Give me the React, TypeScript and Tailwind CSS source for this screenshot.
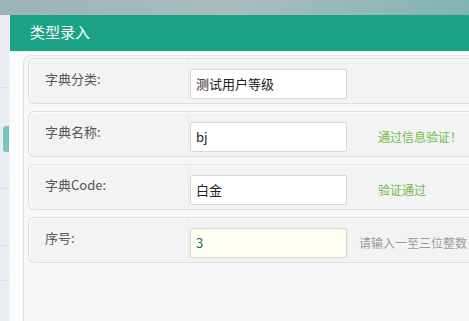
const rows = [
  { label: '字典分类:', value: '测试用户等级', msg: '', msgClass: '', focus: false },
  { label: '字典名称:', value: 'bj', msg: '通过信息验证！', msgClass: 'ml-[31px] text-[#72b84a]', focus: false },
  { label: '字典Code:', value: '白金', msg: '验证通过', msgClass: 'ml-[31px] text-[#72b84a]', focus: false },
  { label: '序号:', value: '3', msg: '请输入一至三位整数', msgClass: 'ml-[12px] text-[#9a9a9a]', focus: true },
];

const FieldRow = ({ label, value, msg, msgClass, focus }: (typeof rows)[number]) => (
  <div className="flex h-[46px] w-[460px] shrink-0 rounded-l-[6px] border border-r-0 border-[#dedede] bg-[#f3f3f3] shadow-[inset_1px_1px_0_#fbfbfb]">
    <div className="w-[160px] shrink-0 border-r border-[#ebebeb] pl-[16px] pt-[11px] text-[13px] leading-[18px] text-[#555]">
      {label}
    </div>
    <div className="flex h-[30px] items-center self-start mt-[10px] ml-[1px]">
      <div
        className={
          focus
            ? 'flex h-[30px] w-[157px] items-center rounded-[3px] border border-[#ddd6c8] bg-[#fffff2] pl-[5px] text-[13px] text-[#1f6f66] shadow-[0_0_2px_#e6e0d2]'
            : 'flex h-[30px] w-[157px] items-center rounded-[2px] border border-[#d6d6d6] bg-white pl-[5px] text-[13px] text-[#222]'
        }
      >
        {value}
      </div>
      {msg && <span className={`whitespace-nowrap text-[12px] ${msgClass}`}>{msg}</span>}
    </div>
  </div>
);

export default function App() {
  return (
    <div
      className="flex h-[321px] w-[469px] flex-col overflow-hidden bg-[#eef1f4]"
      style={{ fontFamily: '"Noto Sans CJK SC", "Noto Sans", sans-serif' }}
    >
      {/* page behind the dialog, top strip */}
      <div className="h-[15px] shrink-0 bg-gradient-to-r from-[#9db3b3] via-[#a9bdbd] to-[#82b3b2]" />
      <div className="flex min-h-0 flex-1">
        {/* page behind the dialog, left strip */}
        <div className="flex w-[10px] shrink-0 flex-col border-r border-[#f7f8fa] bg-[#eaeef2]">
          <div className="h-[73px] border-b border-[#dde3e8]" />
          <div className="mt-[38px] ml-[3px] h-[26px] rounded-l-[3px] bg-[#7cc4bf]" />
          <div className="mt-[36px] h-[1px] bg-[#dde3e8]" />
          <div className="mt-[56px] h-[1px] bg-[#dde3e8]" />
          <div className="mt-[34px] h-[1px] bg-[#dde3e8]" />
        </div>

        {/* dialog */}
        <div className="flex min-w-0 flex-1 flex-col bg-[#fcfcfc]">
          <div className="flex h-[36px] shrink-0 items-center bg-[#1aa386] pl-[20px] pb-[1px] text-[15px] text-white">
            类型录入
          </div>
          <div className="h-[1px] bg-[#efe6ee]" />
          <div className="flex flex-1 pl-[13px] pt-[3px]">
            <div className="flex flex-1 flex-col gap-[7px] rounded-tl-[8px] border border-r-0 border-b-0 border-[#e6dfe6] bg-[#f7f7f7] pl-[4px] pt-[2px]">
              {rows.map((r) => (
                <FieldRow key={r.label} {...r} />
              ))}
            </div>
          </div>
        </div>
      </div>
    </div>
  );
}
